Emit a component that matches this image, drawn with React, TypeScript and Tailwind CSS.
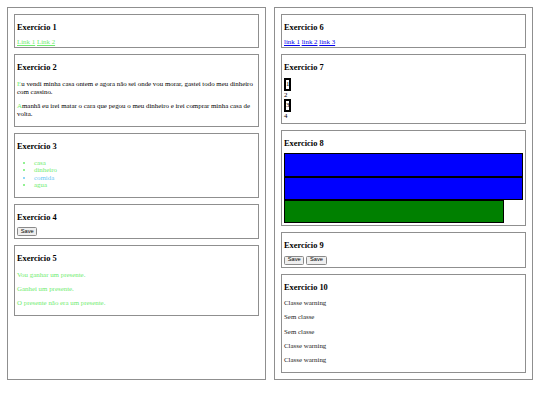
import React from "react";

const Box = ({ children }: { children: React.ReactNode }) => (
  <div className="border border-[#8f8f8f] p-[2px]">{children}</div>
);

const H = ({ children }: { children: React.ReactNode }) => (
  <h3 className="text-[8.4px] font-bold leading-[1.15] mt-[6px] mb-[5px]">{children}</h3>
);

const Btn = () => (
  <button className="h-[9px] px-[2.7px] text-[5.7px] leading-none border border-[#8a8a8a] bg-[#efefef] rounded-[1.5px] text-black [font-family:'Liberation_Sans',Arial,sans-serif]">
    Save
  </button>
);

export default function App() {
  return (
    <div className="w-[540px] h-[405px] bg-white text-black text-[6.9px] leading-[1.13] [font-family:'Liberation_Serif','Times_New_Roman',serif] flex gap-[8px] px-[7px] pt-[7px] items-start">
      <div className="flex-1 self-stretch h-[373px] border border-[#8f8f8f] p-[6px] flex flex-col gap-[6px]">
        <Box>
          <H>Exercício 1</H>
          <div>
            <a className="text-[#6fec6f] underline">Link 1</a>{" "}
            <a className="text-[#6fec6f] underline">Link 2</a>
          </div>
        </Box>
        <Box>
          <H>Exercicio 2</H>
          <p className="my-[6.6px]">
            <span className="text-[#6fec6f]">E</span>u vendi minha casa ontem e agora não sei onde vou morar, gastei todo meu dinheiro com cassino.
          </p>
          <p className="my-[6.6px]">
            <span className="text-[#6fec6f]">A</span>manhã eu irei matar o cara que pegou o meu dinheiro e irei comprar minha casa de volta.
          </p>
        </Box>
        <Box>
          <H>Exercício 3</H>
          <ul className="list-disc pl-[17px] mt-[6.8px] mb-[5.8px] leading-[1.1]">
            <li className="text-[#6fec6f]">casa</li>
            <li className="text-[#6fec6f]">dinheiro</li>
            <li className="text-[#6cc8f5]">comida</li>
            <li className="text-[#6fec6f]">agua</li>
          </ul>
        </Box>
        <Box>
          <H>Exercício 4</H>
          <div className="flex">
            <Btn />
          </div>
        </Box>
        <Box>
          <H>Exercicio 5</H>
          <p className="my-[6.5px] text-[#6fec6f]">Vou ganhar um presente.</p>
          <p className="my-[6.5px] text-[#6fec6f]">Ganhei um presente.</p>
          <p className="my-[6.5px] text-[#6fec6f]">O presente não era um presente.</p>
        </Box>
      </div>
      <div className="flex-1 self-stretch h-[373px] border border-[#8f8f8f] p-[6px] flex flex-col gap-[6px]">
        <Box>
          <H>Exercicio 6</H>
          <div>
            <a className="text-[#0000ee] underline">link 1</a>{" "}
            <a className="text-[#0000ee] underline">link 2</a>{" "}
            <a className="text-[#0000ee] underline">link 3</a>
          </div>
        </Box>
        <Box>
          <H>Exercicio 7</H>
          <div className="w-fit border-2 border-black leading-[1.25]">1</div>
          <div className="leading-[1.25]">2</div>
          <div className="w-fit border-2 border-black leading-[1.25]">3</div>
          <div className="leading-[1.25]">4</div>
        </Box>
        <Box>
          <H>Exercicio 8</H>
          <div className="h-[23.3px] w-full bg-[#0000ff] border border-black" />
          <div className="h-[23.3px] w-full bg-[#0000ff] border border-black" />
          <div className="h-[23.3px] w-[220px] bg-[#008000] border border-black" />
        </Box>
        <Box>
          <H>Exercício 9</H>
          <div className="flex gap-[2px]">
            <Btn />
            <Btn />
          </div>
        </Box>
        <Box>
          <H>Exercicio 10</H>
          <p className="my-[6.5px] text-[#222]">Classe warning</p>
          <p className="my-[6.5px] text-[#222]">Sem classe</p>
          <p className="my-[6.5px] text-[#222]">Sem classe</p>
          <p className="my-[6.5px] text-[#222]">Classe warning</p>
          <p className="my-[6.5px] text-[#222]">Classe warning</p>
        </Box>
      </div>
    </div>
  );
}
